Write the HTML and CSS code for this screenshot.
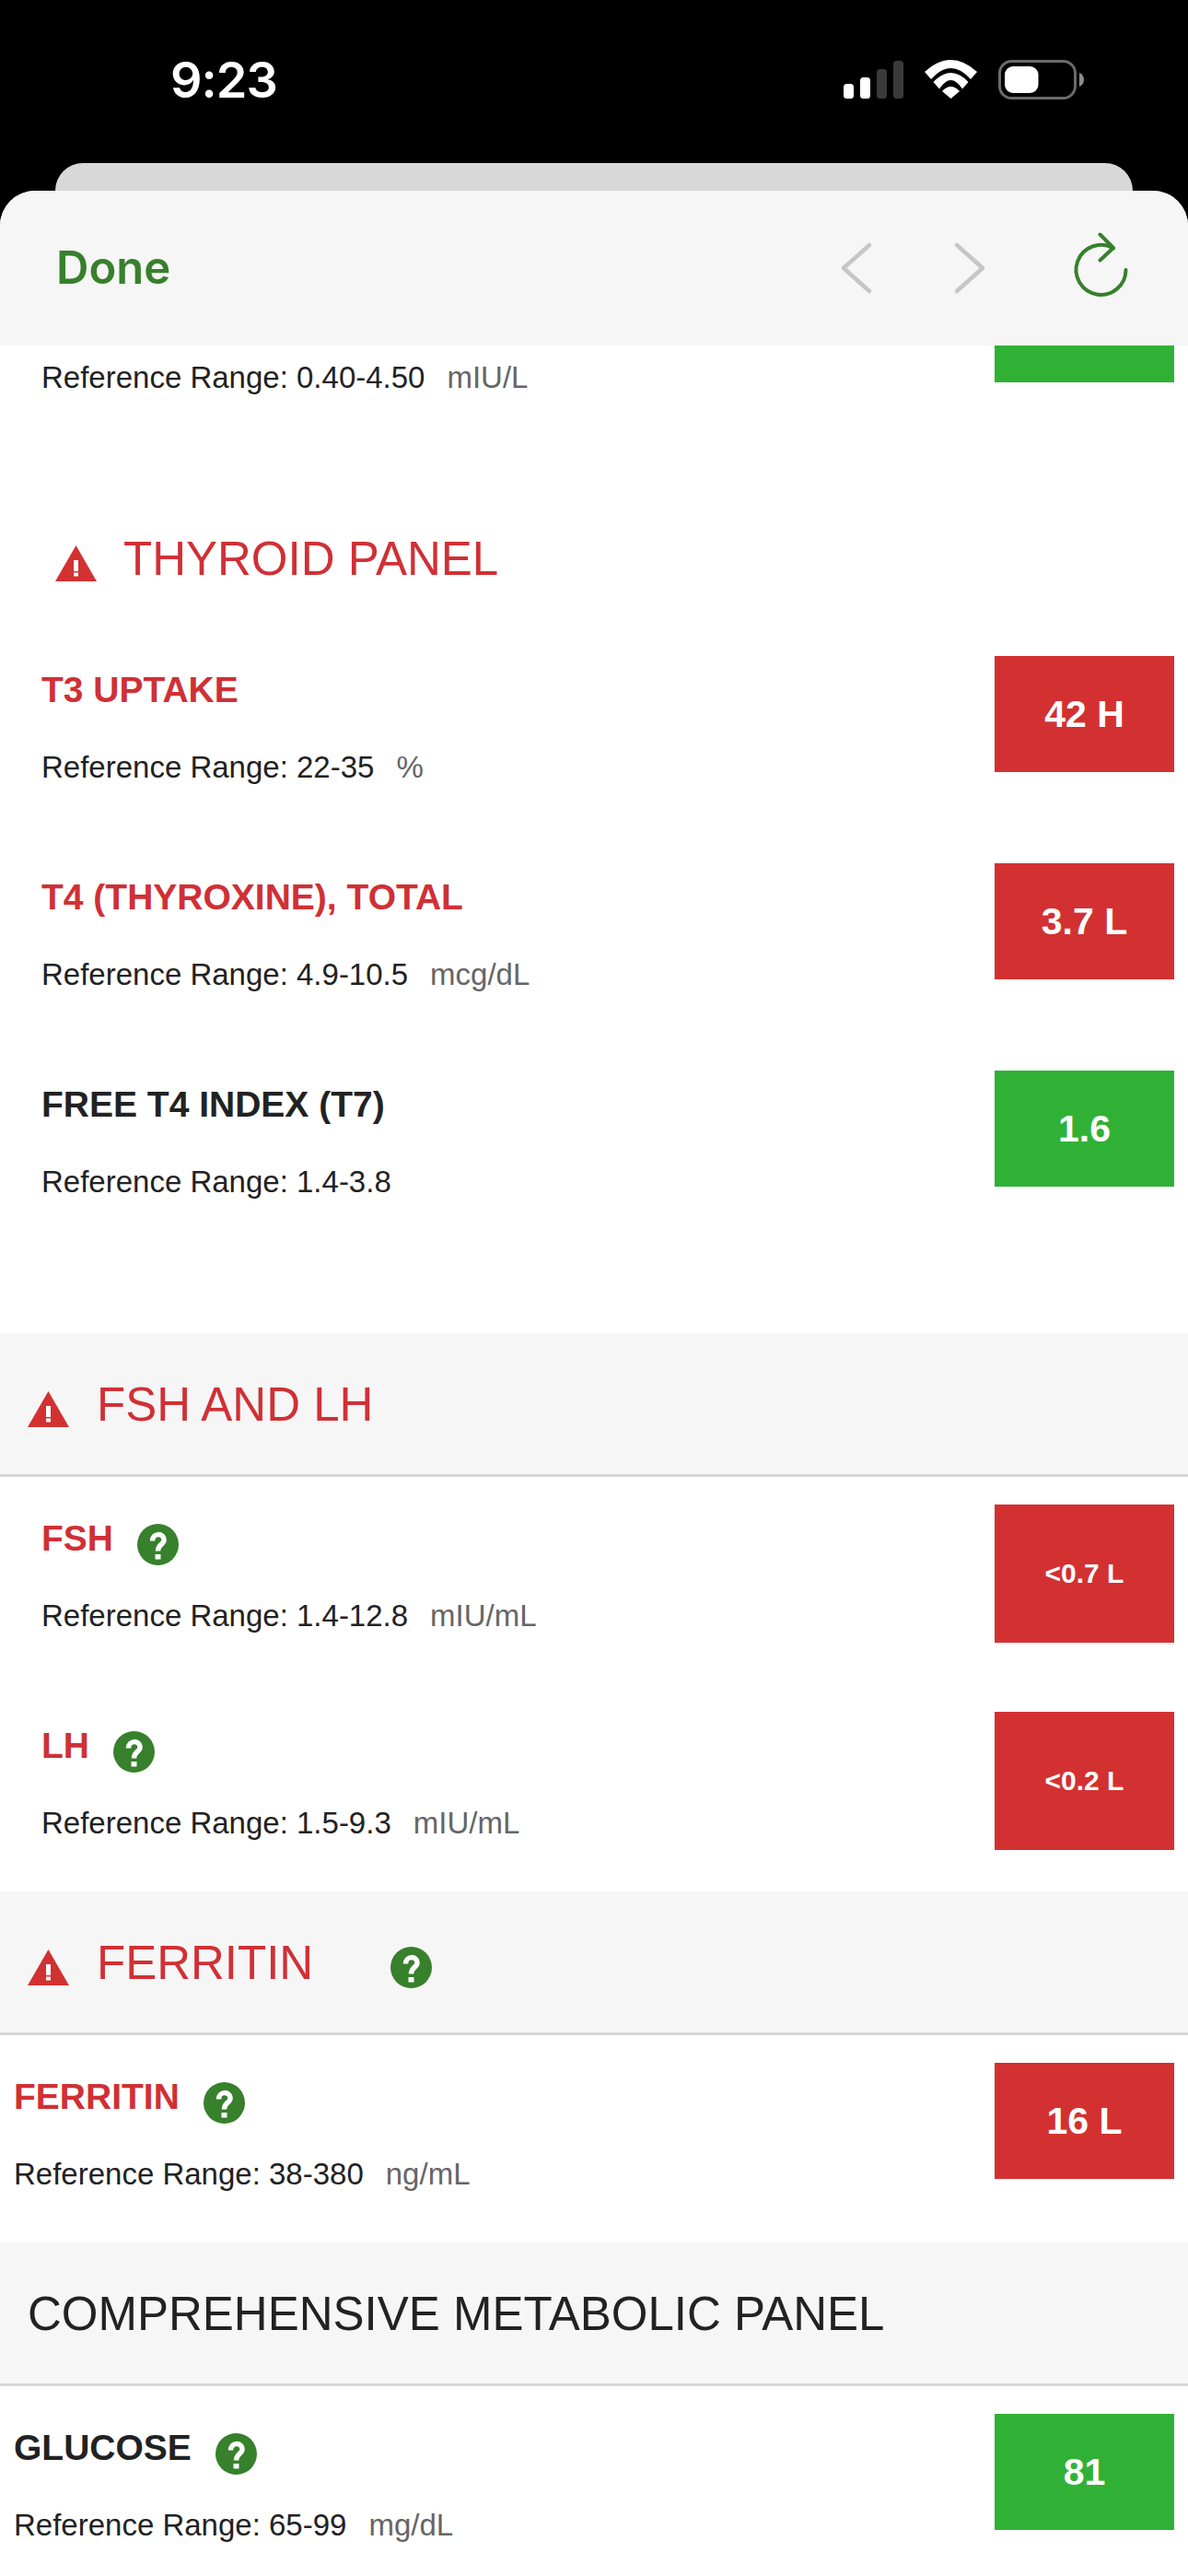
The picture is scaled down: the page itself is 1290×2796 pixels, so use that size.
FILE: index.html
```html
<!DOCTYPE html>
<html lang="en">
<head>
<meta charset="utf-8">
<title>Lab results</title>
<link rel="stylesheet" href="styles.css">
</head>
<body>
<svg class="defs" width="0" height="0" aria-hidden="true">
  <symbol id="warn" viewBox="0 0 45 39"><path d="M22.5 0 45 39H0Z" fill="#d33131"/><rect x="20" y="16" width="5" height="12" fill="#fff"/><rect x="20" y="29.5" width="5" height="4" fill="#fff"/></symbol>
  <symbol id="help" viewBox="0 0 45 45"><circle cx="22.5" cy="22.5" r="22.5" fill="#37802c"/><path d="M16.5 18.5C16.5 9.500 29 9.500 29 17.500 29 22.500 22.500 22 22.500 29.500" fill="none" stroke="#fff" stroke-width="5.500"/><rect x="19.500" y="33" width="6" height="5.500" fill="#fff"/></symbol>
</svg>
<div class="phone">
  <header class="status">
    <span class="time">9:23</span>
    <div class="status-icons">
      <svg width="65" height="42" viewBox="0 0 65 42"><rect x="0" y="26" width="11" height="16" rx="3.5" fill="#fff"/><rect x="18" y="19" width="11" height="23" rx="3.5" fill="#fff"/><rect x="36" y="10" width="11" height="32" rx="3.5" fill="#3a3a3a"/><rect x="54" y="1" width="11" height="41" rx="3.5" fill="#3a3a3a"/></svg>
      <svg width="57" height="42" viewBox="0 0 57 42" fill="#fff"><path d="M0 13Q28.5-13 57 13L50 21Q28.500-3 7 21Z"/><path d="M9.500 24Q28.500 4 47.500 24L41 31.500Q28.500 12.500 16 31.500Z"/><path d="M19 34Q28.500 24 38 34L28.500 42Z"/></svg>
      <svg width="94" height="44" viewBox="0 0 94 44"><rect x="1.500" y="1.500" width="82" height="40" rx="13" fill="none" stroke="#6b6b6b" stroke-width="3"/><rect x="7" y="7" width="36.500" height="29" rx="9" fill="#fff"/><path d="M88 14Q93 16 93 21.500 93 27 88 29Z" fill="#8a8a8a"/></svg>
    </div>
  </header>
  <div class="back-card"></div>
  <div class="sheet">
    <nav class="nav">
      <span class="done">Done</span>
      <div class="nav-icons">
        <svg width="36" height="60" viewBox="0 0 36 60" fill="none" stroke="#c6c6c6" stroke-width="4.500" stroke-linecap="round" stroke-linejoin="round"><path d="M32 5 4 30 32 55"/></svg>
        <svg width="36" height="60" viewBox="0 0 36 60" fill="none" stroke="#c6c6c6" stroke-width="4.500" stroke-linecap="round" stroke-linejoin="round"><path d="M4 5 32 30 4 55"/></svg>
        <svg class="reload" width="66" height="76" viewBox="0 0 66 76" fill="none" stroke="#37802c" stroke-width="4" stroke-linecap="round" stroke-linejoin="round"><path d="M59.500 42A27 27 0 1 1 46 18.500"/><path d="M31.500 3.500 46 18 31.500 31.500"/></svg>
      </div>
    </nav>
    <main class="content">
      <div class="scroll">
        <div class="row first">
          <div class="row-text">
            <div class="title"></div>
            <div class="range">Reference Range: 0.40-4.50<span class="unit">mIU/L</span></div>
          </div>
          <div class="badge green"></div>
        </div>

        <h2 class="plain-head red"><svg class="warn"><use href="#warn"/></svg>THYROID PANEL</h2>
        <div class="rows thyroid">
          <div class="row">
            <div class="row-text">
              <div class="title red">T3 UPTAKE</div>
              <div class="range">Reference Range: 22-35<span class="unit">%</span></div>
            </div>
            <div class="badge redbg">42 H</div>
          </div>
          <div class="row">
            <div class="row-text">
              <div class="title red">T4 (THYROXINE), TOTAL</div>
              <div class="range">Reference Range: 4.9-10.5<span class="unit">mcg/dL</span></div>
            </div>
            <div class="badge redbg">3.7 L</div>
          </div>
          <div class="row">
            <div class="row-text">
              <div class="title">FREE T4 INDEX (T7)</div>
              <div class="range">Reference Range: 1.4-3.8</div>
            </div>
            <div class="badge green">1.6</div>
          </div>
        </div>

        <h2 class="section-head red"><svg class="warn"><use href="#warn"/></svg>FSH AND LH</h2>
        <div class="rows hormones">
          <div class="row">
            <div class="row-text">
              <div class="title red">FSH<svg class="help"><use href="#help"/></svg></div>
              <div class="range">Reference Range: 1.4-12.8<span class="unit">mIU/mL</span></div>
            </div>
            <div class="badge redbg tall">&lt;0.7 L</div>
          </div>
          <div class="row">
            <div class="row-text">
              <div class="title red">LH<svg class="help"><use href="#help"/></svg></div>
              <div class="range">Reference Range: 1.5-9.3<span class="unit">mIU/mL</span></div>
            </div>
            <div class="badge redbg tall">&lt;0.2 L</div>
          </div>
        </div>

        <h2 class="section-head red"><svg class="warn"><use href="#warn"/></svg>FERRITIN<svg class="help head-help"><use href="#help"/></svg></h2>
        <div class="rows ferritin">
          <div class="row wide">
            <div class="row-text">
              <div class="title red">FERRITIN<svg class="help"><use href="#help"/></svg></div>
              <div class="range">Reference Range: 38-380<span class="unit">ng/mL</span></div>
            </div>
            <div class="badge redbg">16 L</div>
          </div>
        </div>

        <h2 class="section-head dark">COMPREHENSIVE METABOLIC PANEL</h2>
        <div class="rows">
          <div class="row wide">
            <div class="row-text">
              <div class="title">GLUCOSE<svg class="help"><use href="#help"/></svg></div>
              <div class="range">Reference Range: 65-99<span class="unit">mg/dL</span></div>
            </div>
            <div class="badge green">81</div>
          </div>
        </div>
      </div>
    </main>
  </div>
</div>
</body>
</html>
```

FILE: styles.css
```css
* { box-sizing: border-box; }
html, body { margin: 0; padding: 0; background: #000; }
body { font-family: "Liberation Sans", Arial, sans-serif; color: #222; }
.defs { position: absolute; }

.phone { width: 1290px; height: 2796px; display: flex; flex-direction: column; overflow: hidden; }

.status { height: 177px; flex: none; display: flex; justify-content: space-between; align-items: flex-start; padding: 65px 112px 0 185px; }
.time { font-family: Inter, sans-serif; font-weight: 600; font-size: 54px; line-height: 44px; color: #fff; letter-spacing: -1px; }
.status-icons { display: flex; gap: 23px; align-items: flex-start; }

.back-card { height: 30px; flex: none; margin: 0 60px; background: #d8d8d8; border-radius: 30px 30px 0 0; }

.sheet { flex: 1; min-height: 0; display: flex; flex-direction: column; background: #fff; border-radius: 38px 38px 0 0; overflow: hidden; }

.nav { height: 168px; flex: none; display: flex; justify-content: space-between; align-items: center; background: #f6f6f6; padding: 0 61px 0 61px; }
.done { font-family: Inter, sans-serif; font-weight: 600; font-size: 49px; line-height: 56px; color: #37802c; letter-spacing: 0; }
.nav-icons { display: flex; align-items: center; gap: 87px; }
.nav-icons .reload { margin: 0 0 4px 5px; }

.content { flex: 1; min-height: 0; overflow: hidden; }
.scroll { margin-top: -86px; }

.red { color: #d03035; }
.dark { color: #222; }

.row { display: flex; justify-content: space-between; align-items: flex-start; padding: 0 15px 0 45px; min-height: 140px; }
.row.wide { padding-left: 15px; }

.row-text { padding-top: 15px; }
.title { height: 44px; display: flex; align-items: flex-start; font-size: 39px; line-height: 44px; font-weight: 700; color: #222; }
.title.red { color: #d03035; }
.range { margin-top: 43px; font-size: 33px; line-height: 38px; color: #222; white-space: nowrap; }
.unit { margin-left: 24px; color: #666; }

.badge { flex: none; width: 195px; height: 126px; display: flex; align-items: center; justify-content: center; color: #fff; font-size: 41px; font-weight: 700; }
.badge.tall { height: 150px; font-size: 30px; }
.green { background: #30b136; }
.redbg { background: #d33131; }

.help { width: 45px; height: 45px; flex: none; margin: 6px 0 0 26px; }
.warn { width: 45px; height: 39px; flex: none; margin: 14px 30px 0 0; }

.plain-head, .section-head { display: flex; align-items: flex-start; margin: 0; font-weight: 400; font-size: 51px; line-height: 58px; white-space: nowrap; }
.plain-head { padding: 149px 0 76px 60px; }
.plain-head .warn { margin-right: 29px; margin-top: 14px; }
.section-head { height: 156px; padding: 49px 0 0 30px; background: #f6f6f6; border-bottom: 3px solid #d6d6d6; }
.section-head .help.head-help { margin: 11px 0 0 84px; }

.rows { display: flex; flex-direction: column; padding-top: 30px; }
.thyroid { padding: 0 0 145px; gap: 85px; }
.hormones { gap: 75px; padding-bottom: 45px; }
.ferritin { padding-bottom: 55px; }
```
